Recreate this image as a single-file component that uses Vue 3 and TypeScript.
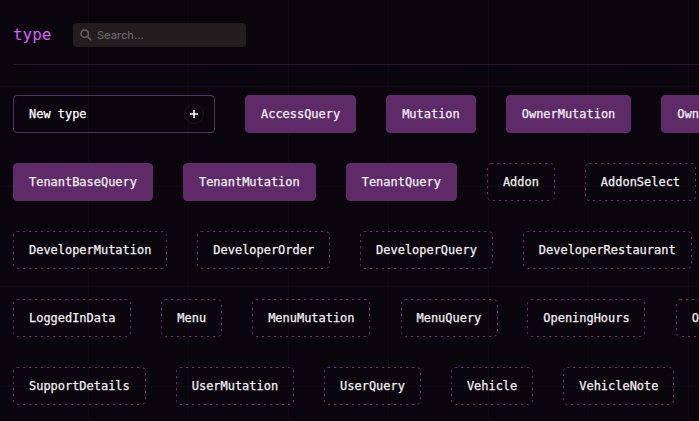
<script setup lang="ts">
type Kind = 'new' | 'solid' | 'dashed'
interface TypeNode { name: string; kind: Kind }

const solid = (name: string): TypeNode => ({ name, kind: 'solid' })
const dashed = (name: string): TypeNode => ({ name, kind: 'dashed' })

// Whole-pixel outline width, so both vertical edges stay crisp.
const outlineWidth = (name: string): number => Math.round(name.length * 7.2 + 32) - 1

const rows: TypeNode[][] = [
  [{ name: 'New type', kind: 'new' }, ...['AccessQuery', 'Mutation', 'OwnerMutation', 'OwnerQuery'].map(solid)],
  [...['TenantBaseQuery', 'TenantMutation', 'TenantQuery'].map(solid), ...['Addon', 'AddonSelect'].map(dashed)],
  ['DeveloperMutation', 'DeveloperOrder', 'DeveloperQuery', 'DeveloperRestaurant'].map(dashed),
  ['LoggedInData', 'Menu', 'MenuMutation', 'MenuQuery', 'OpeningHours', 'Order'].map(dashed),
  ['SupportDetails', 'UserMutation', 'UserQuery', 'Vehicle', 'VehicleNote'].map(dashed),
]
</script>

<template>
  <main class="area">
    <header class="header">
      <h1 class="title">type</h1>
      <label class="search">
        <svg class="glass" viewBox="0 0 12 12" width="12" height="12">
          <circle cx="4.7" cy="4.7" r="3.7" />
          <path d="M7.5 7.5 L10.7 10.7" />
        </svg>
        <input class="input" type="text" placeholder="Search..." />
      </label>
    </header>
    <section class="rows">
      <div v-for="(row, i) in rows" :key="i" class="row">
        <div v-for="node in row" :key="node.name" class="node" :class="node.kind">
          <svg v-if="node.kind === 'dashed'" class="outline">
            <rect x="0.5" y="0.5" rx="4" height="37" :width="outlineWidth(node.name)" />
          </svg>
          <span class="name">{{ node.name }}</span>
          <span v-if="node.kind === 'new'" class="add">
            <svg class="plus" viewBox="0 0 8 8" width="8" height="8"><path d="M4 0 V8 M0 4 H8" /></svg>
          </span>
        </div>
      </div>
    </section>
  </main>
</template>

<style>
body {
  background: #0b050d;
  overflow: hidden;
}
</style>

<style scoped>
.area {
  box-sizing: border-box;
  height: 421px;
  padding-left: 13px;
  overflow: hidden;
  border-bottom: 1px solid #030104;
  background-color: #0b050d;
  background-image:
    linear-gradient(to right, #100a12 1px, transparent 1px),
    linear-gradient(to bottom, #100a12 1px, transparent 1px);
  background-size: 100px 100px;
  background-position: 88px 86px;
  font-family: "DejaVu Sans Mono", "Liberation Mono", monospace;
}
.header {
  box-sizing: border-box;
  height: 65px;
  padding-top: 23px;
  display: flex;
  align-items: flex-start;
  gap: 21.6px;
  border-bottom: 1px solid #2d1333;
}
.title {
  margin: 0;
  font-size: 15.95px;
  line-height: 24px;
  font-weight: 400;
  color: #d960f6;
}
.search {
  box-sizing: border-box;
  width: 173px;
  height: 24px;
  padding-left: 7px;
  display: flex;
  align-items: center;
  gap: 5px;
  border-radius: 4px;
  background: #231d20;
}
.glass {
  flex: none;
  fill: none;
  stroke: #6b6669;
  stroke-width: 1.5;
  stroke-linecap: round;
}
.input {
  min-width: 0;
  flex: 1;
  padding: 0;
  border: 0;
  outline: 0;
  background: none;
  color: #fff;
  font: 500 11px/24px Inter, sans-serif;
}
.input::placeholder {
  color: #6b6669;
  opacity: 1;
}
.rows {
  padding-top: 30px;
  display: flex;
  flex-direction: column;
  gap: 30px;
}
.row {
  display: flex;
  gap: 30px;
}
.node {
  box-sizing: border-box;
  flex: none;
  height: 38px;
  padding: 0 15px;
  display: flex;
  align-items: center;
  justify-content: space-between;
  border: 1px solid #5e2a68;
  border-radius: 4px;
  color: #f3f0f4;
  font-size: 11.965px;
  line-height: 18px;
  -webkit-text-stroke: 0.25px currentColor;
}
.new {
  width: 202px;
  padding-right: 10px;
  color: #fff;
}
.solid {
  background: #5e2a68;
}
.dashed {
  position: relative;
  border-color: transparent;
}
.outline {
  position: absolute;
  top: -1px;
  left: -1px;
  width: calc(100% + 2px);
  height: 38px;
  overflow: visible;
}
.outline rect {
  fill: none;
  stroke: #6b2f77;
  stroke-width: 1;
  stroke-dasharray: 2.4 3.6;
  stroke-dashoffset: 0.5;
}
.add {
  box-sizing: border-box;
  width: 20px;
  height: 20px;
  display: flex;
  align-items: center;
  justify-content: center;
  border: 1px solid #1c161e;
  border-radius: 50%;
}
.plus {
  flex: none;
}
.plus path {
  stroke: #fff;
  stroke-width: 1.6;
}
</style>
